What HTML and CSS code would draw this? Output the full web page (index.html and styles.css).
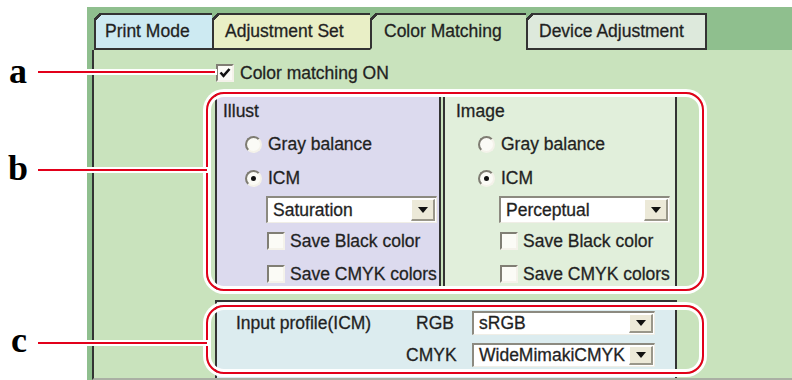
FILE: index.html
```html
<!DOCTYPE html>
<html>
	<head>
		<meta charset="UTF-8">
		<title>Color Matching</title>
		<link rel="stylesheet" href="styles.css">
	</head>
	<body>
		<div id="stage">
			<div id="window">
				<ul id="tabs">
					<li class="tab tab_print">Print Mode</li>
					<li class="tab tab_adjust">Adjustment Set</li>
					<li class="tab tab_color active">Color Matching</li>
					<li class="tab tab_device">Device Adjustment</li>
				</ul>
				<div id="page">
					<div class="check_row main_check">
						<span class="check">
							<svg width="14" height="14" viewBox="0 0 14 14"><path d="M2.5 6.5 L5.5 9.8 L11.5 3" fill="none" stroke="#111" stroke-width="2.6"/></svg>
						</span>
						Color matching ON
					</div>
					<div class="modes">
						<div class="mode mode_illust">
							<div class="mode_title">Illust</div>
							<div class="radio_row"><span class="radio"></span>Gray balance</div>
							<div class="radio_row second"><span class="radio on"></span>ICM</div>
							<div class="select"><span class="select_text">Saturation</span><span class="select_btn"><i class="arrow"></i></span></div>
							<div class="check_row first"><span class="check"></span>Save Black color</div>
							<div class="check_row second"><span class="check"></span>Save CMYK colors</div>
						</div>
						<div class="mode mode_image">
							<div class="mode_title">Image</div>
							<div class="radio_row"><span class="radio"></span>Gray balance</div>
							<div class="radio_row second"><span class="radio on"></span>ICM</div>
							<div class="select"><span class="select_text">Perceptual</span><span class="select_btn"><i class="arrow"></i></span></div>
							<div class="check_row first"><span class="check"></span>Save Black color</div>
							<div class="check_row second"><span class="check"></span>Save CMYK colors</div>
						</div>
					</div>
					<div class="profile">
						<div class="profile_title">Input profile(ICM)</div>
						<div class="profile_key">RGB</div>
						<div class="select small"><span class="select_text">sRGB</span><span class="select_btn"><i class="arrow"></i></span></div>
						<div></div>
						<div class="profile_key">CMYK</div>
						<div class="select small"><span class="select_text">WideMimakiCMYK</span><span class="select_btn"><i class="arrow"></i></span></div>
					</div>
				</div>
			</div>

			<!-- callouts -->
			<div class="note_ring ring_b"></div>
			<div class="note_ring ring_c"></div>
			<div class="note_line line_a"></div>
			<div class="note_line line_b"></div>
			<div class="note_line line_c"></div>
			<div class="note_label label_a">a</div>
			<div class="note_label label_b">b</div>
			<div class="note_label label_c">c</div>
		</div>
	</body>
</html>
```

FILE: styles.css
```css
*{
	margin: 0;
	padding: 0;
	list-style: none;
	box-sizing: border-box;
}
body{
	background: #fff;
	font-family: "Liberation Sans", Arial, sans-serif;
	font-size: 17.5px;
	color: #1e1e1e;
}
#stage{
	position: relative;
	width: 792px;
	height: 380px;
	overflow: hidden;
}
#window{
	margin: 7px 0 0 87px;
	height: 373px;
	padding-left: 5px;
	background: #8fbf8e;
	display: flex;
	flex-direction: column;
	-webkit-text-stroke: 0.3px #2a2a2a;
}

/* tabs */
#tabs{
	display: flex;
	padding: 6px 0 0 2px;
}
.tab{
	position: relative;
	height: 37px;
	line-height: 33px;
	padding-left: 9px;
	margin-left: -2px;
	border: 2px solid #333;
	white-space: nowrap;
}
.tab:first-child{
	margin-left: 0;
}
.tab::before{
	content: "";
	position: absolute;
	left: -2px;
	top: -2px;
	width: 10px;
	height: 10px;
	background: linear-gradient(135deg, #8fbf8e 0, #8fbf8e 4px, #333 4px, #333 6.5px, transparent 6.5px);
}
.tab_print{
	width: 120px;
	background: #cdeaf2;
}
.tab_adjust{
	width: 160px;
	background: #e9efc6;
	padding-left: 11px;
}
.tab_color{
	width: 158px;
	padding-left: 12px;
}
.tab_device{
	width: 181px;
	background: #dde9dc;
	padding-left: 11px;
}
.tab.active{
	background: #c9e3bd;
	border-bottom-color: #c9e3bd;
}

/* page */
#page{
	flex: 1;
	overflow: hidden;
	background: #c9e3bd;
	border-left: 2px solid #333;
	border-bottom: 2px solid #aab0a4;
}
.check_row{
	display: flex;
	align-items: center;
	height: 22px;
	white-space: nowrap;
}
.check{
	width: 18px;
	height: 18px;
	margin-right: 6px;
	flex: none;
	display: flex;
	align-items: center;
	justify-content: center;
	background: #fbfbf6;
	border-top: 2px solid #807e74;
	border-left: 2px solid #807e74;
	border-bottom: 2px solid #f4f2ea;
	border-right: 2px solid #f4f2ea;
}
.main_check{
	height: 18px;
	margin: 14px 0 0 122px;
}

/* Illust / Image */
.modes{
	display: flex;
	height: 197px;
	margin: 12px 0 0 121px;
}
.mode{
	padding: 6px 0 0 6px;
	border-left: 2px solid #333;
	border-right: 2px solid #333;
}
.mode_illust{
	width: 226px;
	background: #dcdaee;
}
.mode_image{
	width: 234px;
	margin-left: 2px;
	padding-left: 11px;
	background: #e1efdb;
}
.mode_title{
	height: 22px;
	line-height: 22px;
}
.radio_row{
	display: flex;
	align-items: center;
	height: 22px;
	margin: 11px 0 0 22px;
}
.radio_row.second{
	margin-top: 12px;
}
.radio{
	width: 17px;
	height: 17px;
	margin-right: 6px;
	border-radius: 50%;
	border: 2px solid;
	border-color: #7e7c72 #f4f2ea #f4f2ea #7e7c72;
	background: #fbfbf6;
	display: flex;
	align-items: center;
	justify-content: center;
}
.radio.on::after{
	content: "";
	width: 5px;
	height: 5px;
	border-radius: 50%;
	background: #111;
}
.mode .select{
	margin: 7px 0 0 43px;
}
.mode .check_row{
	margin-left: 44px;
}
.mode .check_row .check{
	margin-right: 5px;
}
.mode .check_row.first{
	margin-top: 7px;
}
.mode .check_row.second{
	margin-top: 11px;
}

/* drop down */
.select{
	display: flex;
	align-items: center;
	width: 171px;
	height: 27px;
	padding: 1px;
	background: #fff;
	border-top: 2px solid #8c8a80;
	border-left: 2px solid #8c8a80;
	border-bottom: 1px solid #f0eee6;
	border-right: 1px solid #f0eee6;
}
.select_text{
	flex: 1;
	padding-left: 4px;
	white-space: nowrap;
}
.select_btn{
	width: 24px;
	height: 100%;
	display: flex;
	align-items: center;
	justify-content: center;
	background: #ece9d8;
	border-top: 1px solid #fff;
	border-left: 1px solid #fff;
	border-bottom: 2px solid #9a978a;
	border-right: 2px solid #9a978a;
}
.arrow{
	width: 0;
	height: 0;
	border-left: 5px solid transparent;
	border-right: 5px solid transparent;
	border-top: 6px solid #111;
}
.select.small{
	width: 183px;
	height: 24px;
}

/* Input profile */
.profile{
	display: grid;
	grid-template-columns: 170px 66px 183px;
	grid-template-rows: 24px 24px;
	row-gap: 8px;
	align-items: center;
	width: 462px;
	height: 90px;
	margin: 9px 0 0 121px;
	padding: 9px 0 0 19px;
	background: #dcecef;
	border: 2px solid #333;
	border-bottom: none;
}
.profile_key{
	text-align: right;
	padding-right: 18px;
}

/* callouts */
.note_label{
	position: absolute;
	font: bold 36px/36px "Liberation Serif", "Times New Roman", serif;
	color: #000;
}
.label_a{
	left: 9px;
	top: 53px;
}
.label_b{
	left: 8px;
	top: 150px;
}
.label_c{
	left: 11px;
	top: 322px;
}
.note_line{
	position: absolute;
	height: 2px;
	background: #e2001a;
	box-shadow: 0 0 0 2px #fff;
}
.line_a{
	left: 38px;
	top: 71px;
	width: 177px;
}
.line_b{
	left: 38px;
	top: 169px;
	width: 169px;
}
.line_c{
	left: 38px;
	top: 342px;
	width: 169px;
}
.note_ring{
	position: absolute;
	border: 2px solid #e2001a;
	border-radius: 18px;
	box-shadow: 0 0 0 3px #fff, inset 0 0 0 3px #fff;
}
.ring_b{
	left: 206px;
	top: 92px;
	width: 498px;
	height: 199px;
}
.ring_c{
	left: 206px;
	top: 305px;
	width: 498px;
	height: 69px;
}
```
